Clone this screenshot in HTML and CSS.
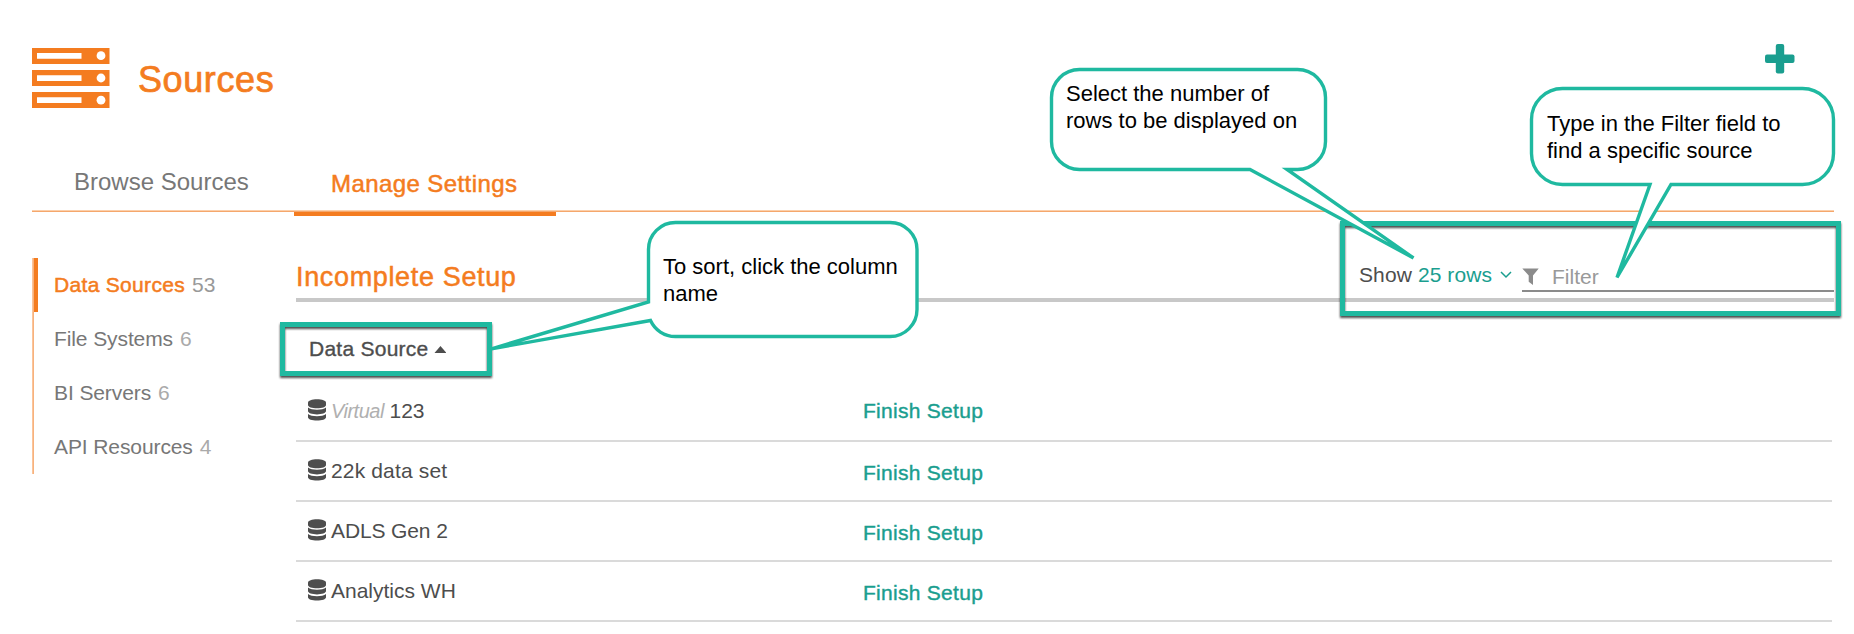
FILE: index.html
```html
<!DOCTYPE html>
<html lang="en">
<head>
<meta charset="utf-8">
<title>Sources</title>
<link rel="stylesheet" href="styles.css">
</head>
<body>
<svg class="defs" width="0" height="0">
  <symbol id="db" viewBox="0 0 18 22">
    <path d="M0 3.6C0 1.6 4 .3 9 .3s9 1.3 9 3.3v2.3c0 2-4 3.300-9 3.300S0 7.900 0 5.900z"/>
    <path d="M0 8.600c1.800 1.500 5.200 2.200 9 2.200s7.200-.7 9-2.200v3.500c0 2-4 3.300-9 3.300s-9-1.300-9-3.300z"/>
    <path d="M0 15c1.800 1.500 5.200 2.200 9 2.200s7.200-.7 9-2.200v3.300c0 2-4 3.300-9 3.300s-9-1.300-9-3.300z"/>
  </symbol>
</svg>
<div class="page">
  <header class="header">
    <svg class="logo" viewBox="0 0 78 60">
      <g fill="#f47c20"><path d="M0 0h77.500v16H0zM0 22h77.500v16H0zM0 44h77.500v16H0z"/></g>
      <g fill="#fff">
        <path d="M5 5h44.500v5.700H5zM5 27.200h44.500v5.700H5zM5 49.300h44.500V55H5z"/>
        <circle cx="69" cy="7.700" r="4.400"/><circle cx="69" cy="30" r="4.400"/><circle cx="69" cy="52.200" r="4.400"/>
      </g>
    </svg>
    <h1 class="title">Sources</h1>
    <svg class="plus" viewBox="0 0 30 30"><rect x="10.800" y="0" width="8.400" height="29.500" rx="2"/><rect x="0" y="10.500" width="29.500" height="8.400" rx="2"/></svg>
  </header>
  <nav class="tabs">
    <a class="tab">Browse Sources</a>
    <a class="tab tab-active">Manage Settings</a>
  </nav>
  <div class="content">
    <aside class="side">
      <a class="side-item side-active"><b>Data Sources</b><span>53</span></a>
      <a class="side-item">File Systems<span>6</span></a>
      <a class="side-item">BI Servers<span>6</span></a>
      <a class="side-item">API Resources<span>4</span></a>
    </aside>
    <main class="main">
      <div class="bar">
        <h2 class="subtitle">Incomplete Setup</h2>
        <div class="show">Show <span>25 rows</span></div>
        <svg class="chevron" viewBox="0 0 12 8"><path d="M1 1l5 5 5-5"/></svg>
        <div class="filter">
          <svg class="funnel" viewBox="0 0 18 18"><path d="M.3.5h16.400L11 7.500V17l-4.300-3.300V7.500z"/></svg>
          <span>Filter</span>
        </div>
      </div>
      <div class="colhead"><span>Data Source</span><i class="caret"></i></div>
      <div class="row"><svg class="db"><use href="#db"/></svg><span class="name"><em>Virtual</em>123</span><a class="finish first">Finish Setup</a></div>
      <div class="row"><svg class="db"><use href="#db"/></svg><span class="name wide">22k data set</span><a class="finish">Finish Setup</a></div>
      <div class="row"><svg class="db"><use href="#db"/></svg><span class="name tight">ADLS Gen 2</span><a class="finish">Finish Setup</a></div>
      <div class="row"><svg class="db"><use href="#db"/></svg><span class="name">Analytics WH</span><a class="finish">Finish Setup</a></div>
    </main>
  </div>
  <div class="mark mark-column"></div>
  <div class="mark mark-filter"></div>
  <svg class="callouts" viewBox="0 0 1854 634">
    <path d="M675.500 222.500H890a27 27 0 0 1 27 27V309.500a27 27 0 0 1-27 27H675.500C664 336.500 655 330 650.500 320.500L491.500 348.800 648.500 302V249.500a27 27 0 0 1 27-27z"/>
    <path d="M1079.500 69.500H1297.500a28 28 0 0 1 28 28V141.500a28 28 0 0 1-28 28H1287L1413.500 258 1250 169.500H1079.500a28 28 0 0 1-28-28V97.500a28 28 0 0 1 28-28z"/>
    <path d="M1562.500 88.500H1802.500a31 31 0 0 1 31 31V153.500a31 31 0 0 1-31 31H1671L1617 277.500 1650 184.500H1562.500a31 31 0 0 1-31-31V119.500a31 31 0 0 1 31-31z"/>
  </svg>
  <p class="tip tip-sort">To sort, click the column<br>name</p>
  <p class="tip tip-rows">Select the number of<br>rows to be displayed on</p>
  <p class="tip tip-filter">Type in the Filter field to<br>find a specific source</p>
</div>
</body>
</html>
```
FILE: styles.css
```css
* { box-sizing: border-box; }
body { margin: 0; background: #fff; font-family: "Liberation Sans", Arial, sans-serif; font-size: 21px; color: #4d4d4d; }
h1, h2, p { margin: 0; font-weight: 400; }
.defs { position: absolute; }
.page { position: relative; width: 1854px; height: 634px; overflow: hidden; padding: 0 20px 0 32px; }

.header { display: flex; align-items: flex-start; height: 156px; padding-top: 44px; }
.logo { width: 78px; height: 60px; margin-top: 4px; }
.title { margin: 16px 0 0 28px; font-size: 36px; line-height: 40px; letter-spacing: .6px; color: #f47c20; -webkit-text-stroke: .7px #f47c20; }
.plus { width: 30px; height: 30px; margin: 0 39px 0 auto; fill: #1a9e8f; }

.tabs { display: flex; height: 60px; font-size: 24px; line-height: 28px; color: #777; background: linear-gradient(#fbcfab 50%, #f5a76c 50%) 0 54px / 100% 2px no-repeat; }
.tab { width: 262px; height: 60px; padding: 12px 0 0 42px; }
.tab-active { padding: 14px 0 0 37px; letter-spacing: .42px; color: #f47c20; -webkit-text-stroke: .5px #f47c20; border-bottom: 4px solid #f47c20; }

.content { display: flex; }
.side { width: 264px; height: 216px; margin-top: 42px; background: linear-gradient(90deg, #fbc49a 50%, #f7b27d 50%) 0 0 / 2px 100% no-repeat; padding-left: 2px; }
.side-item { display: flex; height: 54px; padding: 15px 0 0 20px; line-height: 24px; letter-spacing: -.1px; color: #777; }
.side-active { border-left: 4px solid #f47c20; padding-left: 16px; color: #f47c20; }
.side-active b { font-weight: 400; letter-spacing: .32px; -webkit-text-stroke: .5px #f47c20; }
.side-item span { margin-left: 7px; color: #aaa; }
.side-active span { color: #999; }

.main { width: 1538px; }
.bar { display: flex; height: 86px; border-bottom: 4px solid #c8c8c8; padding-top: 42px; }
.subtitle { width: 1062px; margin-top: 4px; font-size: 27px; line-height: 31px; letter-spacing: .65px; color: #f47c20; -webkit-text-stroke: .5px #f47c20; }
.show { width: 142px; line-height: 24px; margin-top: 5px; padding-left: 1px; letter-spacing: .1px; }
.show span { color: #1a9e8f; }
.chevron { width: 12px; height: 8px; margin: 13px 10px 0 0; fill: none; stroke: #1a9e8f; stroke-width: 1.5; }
.filter { display: flex; width: 312px; height: 34px; border-bottom: 2px solid #8b8b8b; color: #999; line-height: 24px; }
.funnel { width: 18px; height: 18px; margin: 10px 12px 0 0; fill: #8b8b8b; }
.filter span { margin-top: 7px; }
.colhead { display: flex; height: 80px; padding: 35px 0 0 13px; line-height: 24px; letter-spacing: .25px; -webkit-text-stroke: .35px #4d4d4d; }
.caret { width: 12px; height: 7px; margin: 9px 0 0 6px; background: #4d4d4d; clip-path: polygon(50% 0, 100% 100%, 0 100%); }
.row { display: flex; width: 1536px; height: 60px; padding: 17px 0 0 12px; border-bottom: 2px solid #dadada; line-height: 24px; }
.db { width: 18px; height: 22px; fill: #4d4d4d; }
.name { width: 537px; padding-left: 5px; }
.wide { letter-spacing: .15px; }
.tight { letter-spacing: -.12px; }
.name em { display: inline-block; width: 58.500px; font-size: 20px; letter-spacing: -.5px; color: #b0b0b0; }
.finish { margin-top: 2px; letter-spacing: .28px; color: #1a9e8f; -webkit-text-stroke: .4px #1a9e8f; }
.finish.first { margin-top: 0; }

.mark { position: absolute; border: 5px solid #1fb9a0; filter: drop-shadow(0 2px 1px rgba(0, 0, 0, .7)); }
.mark-column { left: 280px; top: 322px; width: 212px; height: 54px; }
.mark-filter { left: 1340px; top: 221px; width: 501px; height: 95px; }
.callouts { position: absolute; left: 0; top: 0; width: 1854px; height: 634px; fill: #fff; stroke: #1fb9a0; stroke-width: 3.4; }
.tip { position: absolute; font-size: 22px; line-height: 27px; color: #000; white-space: nowrap; }
.tip-sort { left: 663px; top: 253px; }
.tip-rows { left: 1066px; top: 80px; }
.tip-filter { left: 1547px; top: 110px; }
```
